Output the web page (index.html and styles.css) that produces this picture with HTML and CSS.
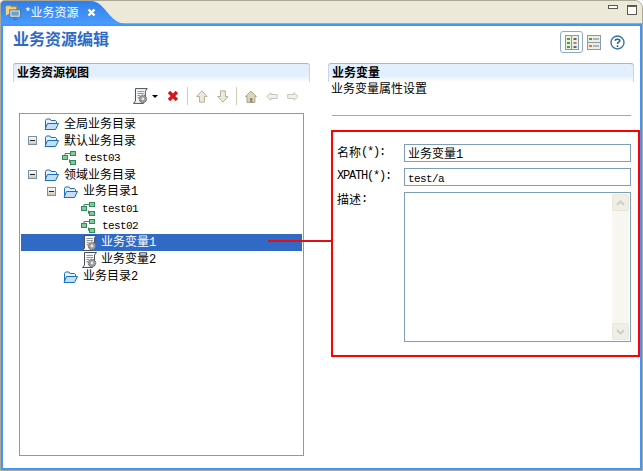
FILE: index.html
```html
<!DOCTYPE html>
<html lang="zh">
<head>
<meta charset="utf-8">
<title>业务资源编辑</title>
<link rel="stylesheet" href="styles.css">
</head>
<body>
<svg class="defs" width="0" height="0">
  <symbol id="folder" viewBox="0 0 15 12">
    <path d="M1.5 10.5V2.5L2.5 1H6L7 2.5H11.5L12.500 3.5V5" fill="#e4f0fc" stroke="#1c6fb5"/>
    <path d="M1 11.5L3.5 5.5H14.5L11.5 11.5Z" fill="#c4def8" stroke="#1c6fb5"/>
  </symbol>
  <symbol id="node" viewBox="0 0 14 14">
    <path d="M3 4.5V2.500H9M7.500 8.500V11.500H9" fill="none" stroke="#3f8c63"/>
    <rect x="0.5" y="4.5" width="5" height="4" fill="#86c99b" stroke="#2f8a5e"/>
    <rect x="8.5" y="0.5" width="5" height="4" fill="#86c99b" stroke="#2f8a5e"/>
    <rect x="8.5" y="9.5" width="5" height="4" fill="#86c99b" stroke="#2f8a5e"/>
  </symbol>
  <symbol id="scroll" viewBox="0 0 15 16">
    <path d="M2.5 .5H14.500L12.500 3V12.500L10.500 15.500H.5L2.500 13Z" fill="#f6f6f4" stroke="#46505f"/>
    <path d="M4.500 3.500H11M4.500 5.500H11M4.500 7.500H7M4.500 9.500H6" stroke="#8e96a4"/>
    <circle cx="10" cy="11" r="3.800" fill="#9a9a9a" stroke="#5f5f5f" stroke-dasharray="1.500 .8"/>
    <circle cx="10" cy="11" r="1.400" fill="#ececec"/>
  </symbol>
  <symbol id="arrow" viewBox="0 0 12 13">
    <path d="M6 .8L11.300 6.500H8.500V12.200H3.500V6.500H.7Z" fill="#eeeadb" stroke="#b5b09a"/>
  </symbol>
  <symbol id="arrow-side" viewBox="0 0 12 9">
    <path d="M.7 4.500L5 .7V2.500H11.300V6.500H5V8.300Z" fill="#f2f1ea" stroke="#c4c4bc"/>
  </symbol>
</svg>

<div class="app">
  <div class="tabbar">
    <div class="tab">
      <svg class="tab-icon" width="17" height="17" viewBox="0 0 16 16">
        <path d="M.5 11V2.500L1.500 1.500H5L6 2.500H11V5" fill="#f6d27c" stroke="#b98a35"/>
        <rect x="4.500" y="5.500" width="10" height="7" fill="#d9ecf7" stroke="#59748c"/>
        <rect x="6" y="7" width="7" height="4" fill="#6f9fc4"/>
        <path d="M7 14.500H12M9.500 12.500V14.500" stroke="#59748c"/>
      </svg>
      <span class="tab-label">*业务资源</span>
      <svg class="tab-close" width="9" height="9" viewBox="0 0 9 9">
        <path d="M1.500 1.500L7.500 7.500M7.500 1.500L1.500 7.500" stroke="#fff" stroke-width="2.400"/>
      </svg>
    </div>
    <div class="win-controls">
      <span class="win-min"></span>
      <span class="win-max"></span>
    </div>
  </div>

  <div class="panel">
    <div class="head">
      <h1 class="title">业务资源编辑</h1>
      <div class="head-tools">
        <span class="mode-on">
          <svg width="14" height="15" viewBox="0 0 14 15">
            <rect x=".5" y=".5" width="13" height="14" fill="#efeddc" stroke="#8c9aa8"/>
            <path d="M6.500 1V14" stroke="#8c9aa8"/>
            <path d="M2 3h3v2H2zM2 7h3v2H2zM2 11h3v2H2z" fill="#3aa55a"/>
            <path d="M8.500 3h3v2h-3zM8.500 11h3v2h-3z" fill="#3b6fb5"/>
            <path d="M8.500 7h3v2h-3z" fill="#e0705a"/>
          </svg>
        </span>
        <svg class="mode-off" width="14" height="15" viewBox="0 0 14 15">
          <rect x=".5" y=".5" width="13" height="14" fill="#efeddc" stroke="#8c9aa8"/>
          <path d="M1 7.500H13" stroke="#8c9aa8"/>
          <path d="M2 3h3v2H2z" fill="#3aa55a"/>
          <path d="M2 10h3v2H2z" fill="#e0705a"/>
          <path d="M6 4H12M6 11H12" stroke="#5e80a8"/>
        </svg>
        <svg class="help" width="15" height="15" viewBox="0 0 15 15">
          <circle cx="7.500" cy="7.500" r="6.500" fill="#fff" stroke="#3a76a8" stroke-width="1.400"/>
          <path d="M5.200 5.800C5.200 3.600 9.800 3.600 9.800 5.800C9.800 7.300 7.500 7.200 7.500 9" fill="none" stroke="#2c5f90" stroke-width="1.500"/>
          <path d="M6.700 10.300h1.600v1.600H6.700z" fill="#2c5f90"/>
        </svg>
      </div>
    </div>

    <div class="columns">
      <section class="col">
        <h2 class="sec-title">业务资源视图</h2>
        <div class="toolbar">
          <svg class="t-scroll" width="15" height="16"><use href="#scroll"/></svg>
          <span class="t-drop"></span>
          <svg class="t-del" width="12" height="12" viewBox="0 0 12 12">
            <path d="M2 2L10 10M10 2L2 10" stroke="#d8141c" stroke-width="3.400"/>
          </svg>
          <span class="t-sep"></span>
          <svg class="t-btn" width="12" height="13"><use href="#arrow"/></svg>
          <svg class="t-btn flip" width="12" height="13"><use href="#arrow"/></svg>
          <span class="t-sep"></span>
          <svg class="t-home" width="12" height="13" viewBox="0 0 12 13">
            <path d="M6 1L11.500 6.500H10V12.500H2V6.500H.5Z" fill="#dcd6bd" stroke="#a8a28a"/>
            <path d="M5 8h2.500v4.500H5z" fill="#8f8a76"/>
          </svg>
          <svg class="t-side" width="12" height="9"><use href="#arrow-side"/></svg>
          <svg class="t-side flip-x" width="12" height="9"><use href="#arrow-side"/></svg>
        </div>
        <div class="tree">
          <div class="row lv0"><span class="exp-none"></span><svg class="ic-folder" width="15" height="12"><use href="#folder"/></svg><span class="txt">全局业务目录</span></div>
          <div class="row lv0"><span class="exp"></span><svg class="ic-folder" width="15" height="12"><use href="#folder"/></svg><span class="txt">默认业务目录</span></div>
          <div class="row leaf1"><svg class="ic-node" width="14" height="14"><use href="#node"/></svg><span class="txt mono">test03</span></div>
          <div class="row lv0"><span class="exp"></span><svg class="ic-folder" width="15" height="12"><use href="#folder"/></svg><span class="txt">领域业务目录</span></div>
          <div class="row lv1"><span class="exp"></span><svg class="ic-folder" width="15" height="12"><use href="#folder"/></svg><span class="txt">业务目录<span class="digit">1</span></span></div>
          <div class="row leaf2"><svg class="ic-node" width="14" height="14"><use href="#node"/></svg><span class="txt mono">test01</span></div>
          <div class="row leaf2"><svg class="ic-node" width="14" height="14"><use href="#node"/></svg><span class="txt mono">test02</span></div>
          <div class="row var selected"><svg class="ic-var" width="15" height="16"><use href="#scroll"/></svg><span class="txt">业务变量<span class="digit">1</span></span></div>
          <div class="row var"><svg class="ic-var" width="15" height="16"><use href="#scroll"/></svg><span class="txt">业务变量<span class="digit">2</span></span></div>
          <div class="row lv1"><span class="exp-none"></span><svg class="ic-folder" width="15" height="12"><use href="#folder"/></svg><span class="txt">业务目录<span class="digit">2</span></span></div>
        </div>
      </section>

      <section class="col">
        <h2 class="sec-title">业务变量</h2>
        <p class="sec-desc">业务变量属性设置</p>
        <div class="sep"></div>
        <form class="form">
          <label class="f-label">名称<span class="digit">(*):</span></label>
          <div class="input">业务变量<span class="digit">1</span></div>
          <label class="f-label"><span class="digit">XPATH(*):</span></label>
          <div class="input"><span class="mono">test/a</span></div>
          <label class="f-label f-top">描述<span class="digit">:</span></label>
          <div class="area">
            <div class="scrollbar">
              <span class="sb-btn"><svg width="9" height="6" viewBox="0 0 9 6"><path d="M1 5L4.500 1.500L8 5" fill="none" stroke="#cfcfc8" stroke-width="2"/></svg></span>
              <span class="sb-track"></span>
              <span class="sb-btn"><svg width="9" height="6" viewBox="0 0 9 6"><path d="M1 1L4.500 4.500L8 1" fill="none" stroke="#cfcfc8" stroke-width="2"/></svg></span>
            </div>
          </div>
        </form>
      </section>
    </div>
    <div class="callout-line"></div>
  </div>
</div>
</body>
</html>
```

FILE: styles.css
```css
* { box-sizing: border-box; }

html, body {
  margin: 0;
  padding: 0;
  background: #fff;
}

body {
  font-family: "Noto Sans CJK SC", "Liberation Sans", sans-serif;
  font-size: 12px;
  line-height: 14px;
  color: #000;
}

.defs { display: block; height: 0; }

.mono {
  font-family: "Liberation Mono", "DejaVu Sans Mono", monospace;
  font-size: 11px;
  letter-spacing: -0.6px;
}

.digit {
  font-family: "Liberation Mono", "DejaVu Sans Mono", monospace;
  font-size: 12px;
  letter-spacing: -1.2px;
}

.app {
  width: 643px;
  height: 471px;
  display: flex;
  flex-direction: column;
  border: 1px solid #aca899;
  border-top-right-radius: 8px;
  border-top-left-radius: 4px;
  background: #ece9d8;
  overflow: hidden;
}

.tabbar {
  flex: 0 0 23px;
  display: flex;
  justify-content: space-between;
  background: #ece9d8;
  border-bottom: 1px solid #aca899;
}

.tab {
  width: 128px;
  height: 23px;
  margin-bottom: -1px;
  padding: 0 0 1px 4px;
  display: flex;
  align-items: center;
  color: #fff;
  background: linear-gradient(#2f7fe8, #4a9bff);
  clip-path: path("M0 0 L90 0 C104 0 108 23 126 23 L0 23 Z");
}

.tab-icon { flex: none; margin-right: 3px; }
.tab-label { width: 62px; }
.tab-close { flex: none; }

.win-controls {
  display: flex;
  align-items: flex-start;
  gap: 9px;
  padding: 4px 5px 0 0;
}

.win-min {
  width: 10px;
  height: 4px;
  border: 1px solid #5c5a4e;
  background: #fff;
}

.win-max {
  width: 10px;
  height: 10px;
  border: 1px solid #5c5a4e;
  border-top-width: 2px;
  background: #fff;
}

.panel {
  position: relative;
  flex: 1;
  min-height: 0;
  padding: 0 6px 0 10px;
  background: #fff;
  border: 2px solid #3f96ff;
}

.head {
  height: 37px;
  display: flex;
  justify-content: space-between;
  align-items: flex-start;
}

.title {
  margin: 2px 0 0;
  font-size: 16px;
  line-height: 20px;
  font-weight: 700;
  color: #3169c6;
}

.head-tools {
  display: flex;
  align-items: center;
  margin: 5px 9px 0 0;
}

.mode-on {
  width: 23px;
  height: 22px;
  display: flex;
  align-items: center;
  justify-content: center;
  border: 1px solid #8fabc4;
  border-radius: 3px;
  margin-right: 4px;
}

.mode-off { margin-right: 9px; }

.columns {
  display: grid;
  grid-template-columns: 297px 306px;
  column-gap: 18px;
}

.col { min-width: 0; }

.sec-title {
  margin: 0;
  height: 19px;
  padding: 0 0 0 4px;
  font-size: 12px;
  line-height: 15px;
  font-weight: 700;
  border-top: 1px solid #9db8e0;
  border-radius: 3px 3px 0 0;
  background: linear-gradient(#e4effd 65%, #fff);
  box-shadow: inset 1px 0 0 #c5d6ee, inset -1px 0 0 #c5d6ee;
}

.toolbar {
  height: 31px;
  display: flex;
  align-items: center;
  padding: 0 11px 3px 120px;
}

.t-drop {
  width: 0;
  height: 0;
  margin: 0 9px 0 4px;
  border: 3px solid transparent;
  border-top-color: #000;
  border-bottom: 0;
}

.t-sep {
  width: 1px;
  height: 18px;
  margin: 0 8px;
  background: #cfcbb6;
}

.t-btn + .t-btn { margin-left: 9px; }
.t-del + .t-sep { margin-left: 8px; }
.t-side { margin-left: 9px; }
.flip { transform: scaleY(-1); }
.flip-x { transform: scaleX(-1); }

.tree {
  width: 285px;
  height: 343px;
  margin-left: 6px;
  padding: 1px;
  background: #fff;
  border: 1px solid #7f9db9;
}

.row {
  height: 17px;
  display: flex;
  align-items: center;
  white-space: nowrap;
}

.txt { margin-bottom: 2px; }
.txt.mono { margin-bottom: 0; }

.lv0 { padding-left: 7px; }
.lv1 { padding-left: 26px; }
.leaf1 { padding-left: 41px; }
.leaf2 { padding-left: 60px; }
.var { padding-left: 61px; }

.exp, .exp-none {
  flex: none;
  width: 9px;
  height: 9px;
  margin-right: 7px;
}

.exp {
  border: 1px solid #7b8fa5;
  background:
    linear-gradient(#222, #222) center / 5px 1px no-repeat,
    linear-gradient(#fff, #cfc8b0);
}

.ic-folder { flex: none; margin-right: 5px; }
.ic-node { flex: none; margin-right: 8px; }
.leaf2 .ic-node { margin-right: 7px; }
.ic-var { flex: none; margin-right: 4px; }

.selected {
  background: #316ac5;
  color: #fff;
}

.sec-desc {
  margin: -1px 0 0;
  height: 15px;
  padding-left: 3px;
}

.sep {
  height: 1px;
  margin: 19px 3px 0 4px;
  background: #aca899;
}

.form {
  width: 309px;
  height: 227px;
  margin: 14px -6px 0 3px;
  padding: 12px 7px 0 4px;
  display: grid;
  grid-template-columns: 67px 227px;
  grid-template-rows: 18px 18px 150px;
  row-gap: 6px;
  border: 2px solid #f00;
}

.f-label {
  display: flex;
  align-items: center;
  padding-bottom: 2px;
  white-space: nowrap;
}

.f-top { align-items: flex-start; }

.input {
  padding: 0 0 0 3px;
  border: 1px solid #7f9db9;
  line-height: 15px;
  background: #fff;
}

.area {
  display: flex;
  justify-content: flex-end;
  padding: 1px;
  border: 1px solid #7f9db9;
  background: #fff;
}

.scrollbar {
  width: 17px;
  display: flex;
  flex-direction: column;
  background: #f7f6f1;
}

.sb-btn {
  flex: 0 0 17px;
  display: flex;
  align-items: center;
  justify-content: center;
  background: #f0efe6;
  border: 1px solid #fff;
  outline: 1px solid #e8e7dc;
  outline-offset: -1px;
  border-radius: 2px;
}

.sb-track { flex: 1; }

.callout-line {
  position: absolute;
  left: 265px;
  top: 214px;
  width: 64px;
  height: 2px;
  background: #e0101a;
}
```
